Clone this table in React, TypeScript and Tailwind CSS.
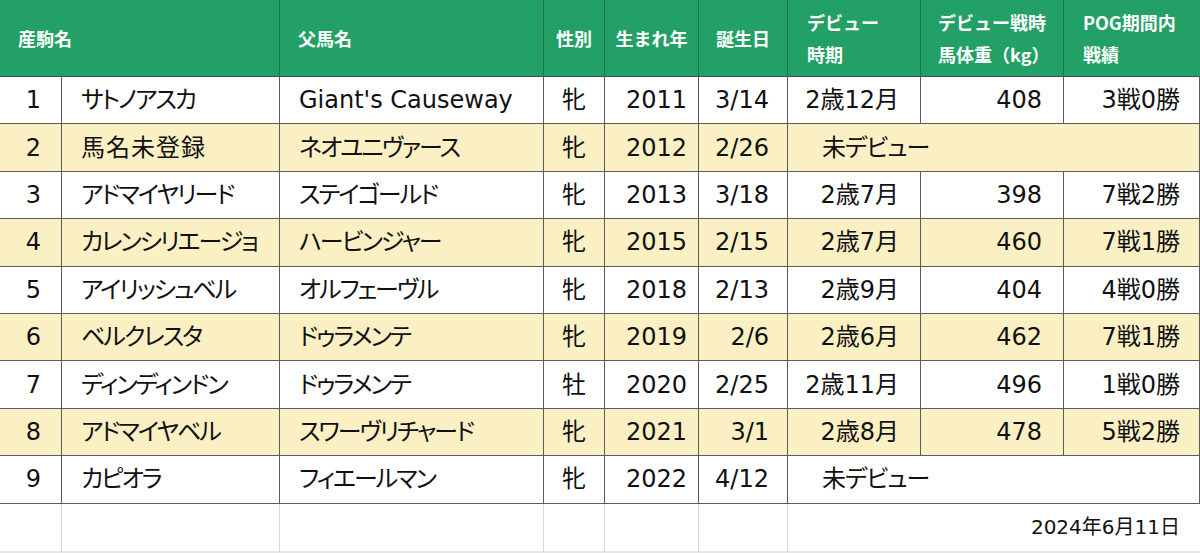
import type { ReactNode } from "react";

type Row = {
  no: number;
  name: string;
  sire: string;
  sex: string;
  year: string;
  birthday: string;
  debut?: string;
  weight?: string;
  record?: string;
};

const rows: Row[] = [
  { no: 1, name: "サトノアスカ", sire: "Giant's Causeway", sex: "牝", year: "2011", birthday: "3/14", debut: "2歳12月", weight: "408", record: "3戦0勝" },
  { no: 2, name: "馬名未登録", sire: "ネオユニヴァース", sex: "牝", year: "2012", birthday: "2/26" },
  { no: 3, name: "アドマイヤリード", sire: "ステイゴールド", sex: "牝", year: "2013", birthday: "3/18", debut: "2歳7月", weight: "398", record: "7戦2勝" },
  { no: 4, name: "カレンシリエージョ", sire: "ハービンジャー", sex: "牝", year: "2015", birthday: "2/15", debut: "2歳7月", weight: "460", record: "7戦1勝" },
  { no: 5, name: "アイリッシュベル", sire: "オルフェーヴル", sex: "牝", year: "2018", birthday: "2/13", debut: "2歳9月", weight: "404", record: "4戦0勝" },
  { no: 6, name: "ベルクレスタ", sire: "ドゥラメンテ", sex: "牝", year: "2019", birthday: "2/6", debut: "2歳6月", weight: "462", record: "7戦1勝" },
  { no: 7, name: "ディンディンドン", sire: "ドゥラメンテ", sex: "牡", year: "2020", birthday: "2/25", debut: "2歳11月", weight: "496", record: "1戦0勝" },
  { no: 8, name: "アドマイヤベル", sire: "スワーヴリチャード", sex: "牝", year: "2021", birthday: "3/1", debut: "2歳8月", weight: "478", record: "5戦2勝" },
  { no: 9, name: "カピオラ", sire: "フィエールマン", sex: "牝", year: "2022", birthday: "4/12" },
];

// katakana names get tightened a bit; kanji and latin stay as is
const isKana = (s: string) => /^[\u30a0-\u30ff]+$/.test(s);

function Head({ children, className = "" }: { children: ReactNode; className?: string }) {
  return (
    <div className={`flex items-center border-r border-b border-r-[#1d7448] border-b-[#4d4d4d] text-[18px] font-bold leading-[32px] text-white ${className}`}>
      {children}
    </div>
  );
}

function Cell({ children, className = "", bg }: { children?: ReactNode; className?: string; bg: string }) {
  return (
    <div className={`flex items-center border-r border-b border-[#5c5c5c] whitespace-nowrap ${bg} ${className}`}>
      {children}
    </div>
  );
}

function Empty({ className = "" }: { className?: string }) {
  return <div className={`border-r border-b-2 border-r-[#d9d9d9] border-b-[#e6e6e6] ${className}`} />;
}

export default function App() {
  return (
    <div className="h-[553px] w-[1200px] overflow-hidden bg-white">
      <div
        className="grid grid-cols-[62px_218px_264px_61px_94px_89px_133px_143px_136px] grid-rows-[77px_repeat(9,47.4px)_49px] text-[#111]"
        style={{ fontFamily: '"DejaVu Sans", "Noto Sans CJK JP", sans-serif' }}
      >
        <div
          className="col-span-9 grid grid-cols-subgrid bg-[#23a066]"
          style={{ fontFamily: '"Noto Sans CJK JP", sans-serif' }}
        >
          <Head className="col-span-2 pl-[18px]">産駒名</Head>
          <Head className="pl-[18px]">父馬名</Head>
          <Head className="justify-center">性別</Head>
          <Head className="justify-center">生まれ年</Head>
          <Head className="justify-center">誕生日</Head>
          <Head className="pl-[19px]">
            <span>デビュー<br />時期</span>
          </Head>
          <Head className="pl-[17px]">
            <span>デビュー戦時<br />馬体重（kg）</span>
          </Head>
          <Head className="pl-[19px] border-r-0">
            <span>POG期間内<br />戦績</span>
          </Head>
        </div>

        {rows.map((r) => {
          const bg = r.no % 2 === 0 ? "bg-[#faf0c4]" : "bg-white";
          return (
            <div key={r.no} className="col-span-9 grid grid-cols-subgrid text-[24px] [font-feature-settings:'palt']">
              <Cell bg={bg} className="justify-end pr-[20px]">{r.no}</Cell>
              <Cell bg={bg} className={isKana(r.name) ? "pl-[19px] tracking-[-2px]" : "pl-[19px] tracking-[1px]"}>{r.name}</Cell>
              <Cell bg={bg} className={isKana(r.sire) ? "pl-[19px] tracking-[-2px]" : "pl-[19px]"}>{r.sire}</Cell>
              <Cell bg={bg} className="justify-center">{r.sex}</Cell>
              <Cell bg={bg} className="justify-end pr-[11px]">{r.year}</Cell>
              <Cell bg={bg} className="justify-end pr-[18px]">{r.birthday}</Cell>
              {r.debut ? (
                <>
                  <Cell bg={bg} className="justify-end pr-[21px]">{r.debut}</Cell>
                  <Cell bg={bg} className="justify-end pr-[21px]">{r.weight}</Cell>
                  <Cell bg={bg} className="justify-end pr-[19px]">{r.record}</Cell>
                </>
              ) : (
                <Cell bg={bg} className="col-span-3 pl-[34px] tracking-[-1px]">未デビュー</Cell>
              )}
            </div>
          );
        })}

        <div className="col-span-9 grid grid-cols-subgrid">
          <Empty />
          <Empty />
          <Empty />
          <Empty />
          <Empty />
          <Empty />
          <div className="col-span-3 flex items-center justify-end border-b-2 border-b-[#e6e6e6] pr-[20px] text-[20px]">
            2024年6月11日
          </div>
        </div>
      </div>
    </div>
  );
}
